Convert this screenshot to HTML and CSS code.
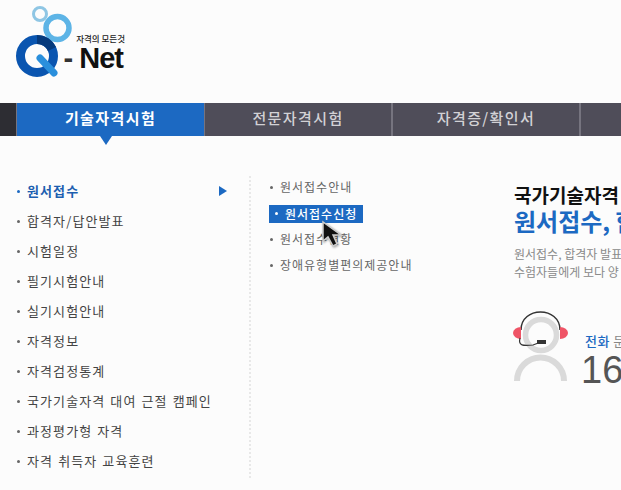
FILE: index.html
```html
<!DOCTYPE html>
<html lang="en">
<head>
  <meta charset="UTF-8" />
  <title>Q-Net</title>
  <link rel="stylesheet" href="styles.css">
</head>
<body>

  <header class="top">
    <a class="logo">
      <svg class="logo-mark" width="64" height="80" viewBox="0 0 64 80">
        <circle cx="40" cy="14" r="6.5" fill="none" stroke="#8fc6e4" stroke-width="3"/>
        <circle cx="57.5" cy="28" r="11.5" fill="none" stroke="#5db4e6" stroke-width="5.5"/>
        <circle cx="37" cy="56" r="16.5" fill="none" stroke="#0a55b0" stroke-width="9"/>
        <path d="M37 39.5 A16.5 16.5 0 0 1 52 49" fill="none" stroke="#063a7c" stroke-width="9"/>
        <line x1="40" y1="58" x2="54" y2="73" stroke="#2a8fdc" stroke-width="7" stroke-linecap="round"/>
      </svg>
      <div class="logo-text">
        <span class="slogan">자격의 모든것</span>
        <span class="brand"><i>-</i>Net</span>
      </div>
    </a>
  </header>

  <nav class="gnb">
    <span class="gnb-edge"></span>
    <a class="gnb-item on">기술자격시험</a>
    <a class="gnb-item">전문자격시험</a>
    <a class="gnb-item">자격증/확인서</a>
  </nav>

  <main class="content">
    <ul class="menu">
      <li class="on">원서접수</li>
      <li>합격자/답안발표</li>
      <li>시험일정</li>
      <li>필기시험안내</li>
      <li>실기시험안내</li>
      <li>자격정보</li>
      <li>자격검정통계</li>
      <li>국가기술자격 대여 근절 캠페인</li>
      <li>과정평가형 자격</li>
      <li>자격 취득자 교육훈련</li>
    </ul>

    <div class="sub">
      <ul class="submenu">
        <li>원서접수안내</li>
        <li class="on">원서접수신청</li>
        <li>원서접수현황</li>
        <li>장애유형별편의제공안내</li>
      </ul>
      <svg class="cursor" width="26" height="30" viewBox="0 0 26 30">
        <path d="M3 2 L3 21 L8 17 L13 26 L17 24 L13 15 L21 15 Z" fill="#111" stroke="#ccc" stroke-width="1.5"/>
      </svg>
    </div>

    <section class="promo">
      <h2>국가기술자격</h2>
      <strong>원서접수, 합</strong>
      <p>원서접수, 합격자 발표<br>수험자들에게 보다 양</p>
      <div class="phone">
        <svg class="agent" width="60" height="72" viewBox="0 0 60 72">
          <circle cx="28" cy="25" r="15.5" fill="none" stroke="#dadada" stroke-width="5.5"/>
          <path d="M4 71 A23.5 23.5 0 0 1 51 71" fill="none" stroke="#dadada" stroke-width="6"/>
          <path d="M8 20 C8 -4 47 -4 47 20" fill="none" stroke="#333" stroke-width="1.5"/>
          <path d="M8 17 L8 29 A8 6 0 0 1 8 17 Z" fill="#ef5466"/>
          <path d="M47 17 L47 29 A8 6 0 0 0 47 17 Z" fill="#ef5466"/>
          <path d="M7 28 C5 36 10 36 20 35 L28 32" fill="none" stroke="#333" stroke-width="1.2"/>
          <rect x="24" y="30" width="9" height="4" fill="#333"/>
        </svg>
        <div class="phone-text">
          <span class="phone-label"><b>전화</b> 문</span>
          <span class="phone-num">16</span>
        </div>
      </div>
    </section>
  </main>

</body>
</html>
```

FILE: styles.css
```css
html, body {
  margin: 0;
  padding: 0;
  overflow: hidden;
}

body {
  width: 621px;
  height: 490px;
  background-color: #fcfcfc;
  color: #444;
  font-family: "Noto Sans CJK KR", "Liberation Sans", sans-serif;
  font-size: 13px;
}

ul {
  list-style: none;
  margin: 0;
  padding: 0;
}

.top {
  height: 103px;
}

.logo {
  display: flex;
}

.logo-mark {
  flex-shrink: 0;
  overflow: visible;
}

.logo-text {
  display: flex;
  flex-direction: column;
  align-items: flex-end;
  width: 61px;
  padding-top: 33px;
}

.slogan {
  font-size: 8.5px;
  line-height: 10px;
  font-weight: 500;
  color: #222;
  white-space: nowrap;
}

.brand {
  margin: 1px 2px 0 0;
  font-family: "Liberation Sans", sans-serif;
  font-size: 29px;
  font-weight: 700;
  line-height: 29px;
  letter-spacing: -1px;
  color: #111;
  white-space: nowrap;
}

.brand i {
  font-style: normal;
  margin-right: 7px;
  color: #333;
}

.gnb {
  display: flex;
  height: 33px;
  background-color: #4f4d59;
}

.gnb-edge {
  width: 17px;
  box-sizing: border-box;
  flex-shrink: 0;
  background-color: #2d2d33;
  border-right: 1px solid #76747f;
}

.gnb-item {
  width: 188px;
  box-sizing: border-box;
  flex-shrink: 0;
  border-right: 2px solid #76747f;
  text-align: center;
  line-height: 30px;
  font-size: 15px;
  font-weight: 500;
  letter-spacing: 1.4px;
  color: #d2d1d5;
}

.gnb-item.on {
  border-right-width: 1px;
  background-color: #1c69c2;
  color: #fff;
  font-weight: 700;
  position: relative;
}

.gnb-item.on::after {
  content: "";
  position: absolute;
  left: 83px;
  top: 33px;
  border-left: 6px solid transparent;
  border-right: 6px solid transparent;
  border-top: 9px solid #1c69c2;
}

.content {
  display: flex;
  padding-top: 40px;
}

.menu {
  width: 233px;
  height: 302px;
  margin-left: 16px;
  flex-shrink: 0;
  border-right: 2px dotted #e8e8e8;
}

.menu li {
  height: 30px;
  line-height: 30px;
  padding-left: 11px;
  position: relative;
  letter-spacing: 1.1px;
  word-spacing: 1px;
  white-space: nowrap;
}

.menu li::before,
.submenu li::before {
  content: "";
  position: absolute;
  width: 3px;
  height: 3px;
  border-radius: 50%;
  background-color: #666;
  left: 1px;
  top: 14px;
}

.menu li.on {
  color: #1c5fb0;
  font-weight: 700;
}

.menu li.on::before {
  background-color: #1c69c2;
}

.menu li.on::after {
  content: "";
  position: absolute;
  left: 203px;
  top: 10px;
  border-top: 5px solid transparent;
  border-bottom: 5px solid transparent;
  border-left: 8px solid #1c69c2;
}

.sub {
  width: 245px;
  margin-left: 18px;
  margin-top: -2px;
  flex-shrink: 0;
  position: relative;
}

.submenu li {
  height: 26px;
  line-height: 26px;
  padding-left: 11px;
  position: relative;
  font-size: 12px;
  color: #666;
  letter-spacing: 1px;
  white-space: nowrap;
}

.submenu li::before {
  top: 12px;
}

.submenu li.on {
  display: table;
  height: 18px;
  line-height: 17px;
  margin: 5px 0 3px;
  padding: 0 6px 0 16px;
  background-color: #1c69c2;
  color: #fff;
  font-weight: 500;
}

.submenu li.on::before {
  background-color: #fff;
  left: 6px;
  top: 7px;
}

.cursor {
  position: absolute;
  left: 51px;
  top: 46px;
  filter: drop-shadow(1px 1px 1px rgba(0, 0, 0, 0.35));
}

.promo {
  flex-shrink: 0;
  width: 107px;
  margin-top: 8px;
}

.promo h2 {
  margin: 0;
  font-size: 19px;
  line-height: 21px;
  font-weight: 700;
  color: #111;
  white-space: nowrap;
}

.promo strong {
  display: block;
  font-size: 24px;
  line-height: 32px;
  font-weight: 700;
  color: #1c69c2;
  white-space: nowrap;
}

.promo p {
  margin: 8px 0 0;
  font-size: 12px;
  line-height: 18px;
  color: #8a8a8a;
  white-space: nowrap;
}

.phone {
  display: flex;
  margin: 29px 0 0 -1px;
}

.agent {
  flex-shrink: 0;
}

.phone-text {
  display: flex;
  flex-direction: column;
  margin: 22px 0 0 12px;
}

.phone-label {
  font-size: 13px;
  line-height: 17px;
  letter-spacing: 0.5px;
  color: #888;
  white-space: nowrap;
}

.phone-label b {
  font-weight: 500;
  color: #1c69c2;
}

.phone-num {
  margin: 3px 0 0 -4px;
  font-family: "Liberation Sans", sans-serif;
  font-size: 38px;
  line-height: 36px;
  color: #555;
  white-space: nowrap;
}
```
